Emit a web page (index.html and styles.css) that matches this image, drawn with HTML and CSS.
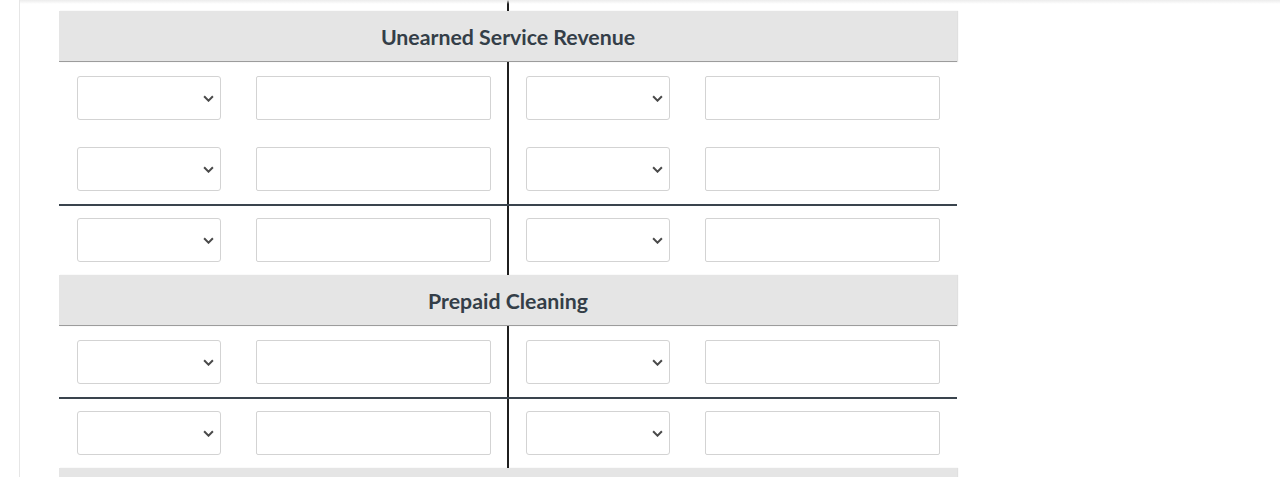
FILE: index.html
```html
<!DOCTYPE html>
<html>
<head>
<meta charset="utf-8">
<link rel="stylesheet" href="styles.css">
</head>
<body>
<div class="panel">
  <div class="stub"><div class="cell"></div><div class="cell right"></div></div>

  <section class="account">
    <div class="title">Unearned Service Revenue</div>
    <div class="row">
      <div class="cell"><div class="sel"><select></select><svg class="chev" viewBox="0 0 10 6"><path d="M1 1l4 4 4-4"/></svg></div><input class="amt" type="text"></div>
      <div class="cell right"><div class="sel"><select></select><svg class="chev" viewBox="0 0 10 6"><path d="M1 1l4 4 4-4"/></svg></div><input class="amt" type="text"></div>
    </div>
    <div class="row">
      <div class="cell"><div class="sel"><select></select><svg class="chev" viewBox="0 0 10 6"><path d="M1 1l4 4 4-4"/></svg></div><input class="amt" type="text"></div>
      <div class="cell right"><div class="sel"><select></select><svg class="chev" viewBox="0 0 10 6"><path d="M1 1l4 4 4-4"/></svg></div><input class="amt" type="text"></div>
    </div>
    <div class="row total">
      <div class="cell"><div class="sel"><select></select><svg class="chev" viewBox="0 0 10 6"><path d="M1 1l4 4 4-4"/></svg></div><input class="amt" type="text"></div>
      <div class="cell right"><div class="sel"><select></select><svg class="chev" viewBox="0 0 10 6"><path d="M1 1l4 4 4-4"/></svg></div><input class="amt" type="text"></div>
    </div>
  </section>

  <section class="account">
    <div class="title">Prepaid Cleaning</div>
    <div class="row">
      <div class="cell"><div class="sel"><select></select><svg class="chev" viewBox="0 0 10 6"><path d="M1 1l4 4 4-4"/></svg></div><input class="amt" type="text"></div>
      <div class="cell right"><div class="sel"><select></select><svg class="chev" viewBox="0 0 10 6"><path d="M1 1l4 4 4-4"/></svg></div><input class="amt" type="text"></div>
    </div>
    <div class="row total">
      <div class="cell"><div class="sel"><select></select><svg class="chev" viewBox="0 0 10 6"><path d="M1 1l4 4 4-4"/></svg></div><input class="amt" type="text"></div>
      <div class="cell right"><div class="sel"><select></select><svg class="chev" viewBox="0 0 10 6"><path d="M1 1l4 4 4-4"/></svg></div><input class="amt" type="text"></div>
    </div>
  </section>

  <section class="account">
    <div class="title">&nbsp;</div>
  </section>
</div>
</body>
</html>
```

FILE: styles.css
```css
* { box-sizing: border-box; }
html, body { margin: 0; padding: 0; background: #fff; }
body {
  font-family: Lato, "Open Sans", "Liberation Sans", sans-serif;
  overflow: hidden;
}
.panel {
  position: relative;
  margin-left: 19px;
  border-left: 1px solid #e6e6e6;
  padding-left: 39px;
  min-height: 477px;
}
.panel::before {
  content: "";
  position: absolute;
  left: 0;
  right: 0;
  top: 0;
  height: 4px;
  background: linear-gradient(#ececec, rgba(255,255,255,0));
}
.stub {
  display: flex;
  width: 898px;
  height: 11px;
}
.account { width: 898px; }
.title {
  height: 51px;
  background: #e5e5e5;
  border-bottom: 1px solid #9c9c9c;
  box-shadow: 1px 0 1px rgba(0,0,0,0.12);
  text-align: center;
  font-weight: 700;
  font-size: 21.3px;
  line-height: 52px;
  color: #343e48;
}
.row { display: flex; }
.cell {
  width: 450px;
  display: flex;
  gap: 35px;
  padding: 14px 16px 13px 18px;
  border-right: 2px solid #1f1f1f;
}
.cell.right {
  width: 448px;
  border-right: 0;
  padding-left: 17px;
  padding-right: 17px;
}
.stub .cell { padding: 0; }
.row.total { border-top: 2px solid #3a444d; }
.row.total .cell { padding-top: 12px; }
.account + .account .row:first-of-type .cell { padding-top: 15px; }
.sel {
  position: relative;
  width: 144px;
  height: 44px;
}
.sel select {
  appearance: none;
  -webkit-appearance: none;
  width: 100%;
  height: 100%;
  border: 1px solid #d3d3d3;
  border-radius: 3px;
  background: #fff;
  margin: 0;
}
.chev {
  position: absolute;
  right: 7px;
  top: 19px;
  width: 11px;
  height: 7px;
  fill: none;
  stroke: #4a4a4a;
  stroke-width: 1.8;
  pointer-events: none;
}
.amt {
  width: 235px;
  height: 44px;
  margin: 0;
  border: 1px solid #d3d3d3;
  border-radius: 2px;
  background: #fff;
}
```
